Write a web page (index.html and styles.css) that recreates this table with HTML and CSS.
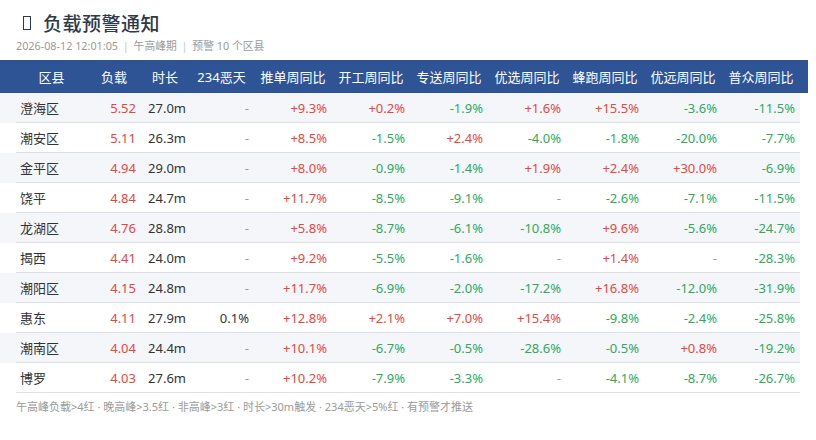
FILE: index.html
```html
<!DOCTYPE html>
<html lang="zh">
<head>
<meta charset="utf-8">
<title>负载预警通知</title>
<link rel="stylesheet" href="styles.css">
</head>
<body>
<div class="page">
  <h1 class="title"><span class="tofu"></span>负载预警通知</h1>
  <div class="meta">2026-08-12 12:01:05 <span class="sep">|</span> 午高峰期 <span class="sep">|</span> 预警 10 个区县</div>
  <table class="grid">
    <colgroup>
      <col class="c-name"><col class="c-load"><col class="c-dur"><col class="c-bad">
      <col class="c-w"><col class="c-w"><col class="c-w"><col class="c-w"><col class="c-w"><col class="c-w"><col class="c-w">
    </colgroup>
    <thead>
      <tr>
        <th>区县</th><th>负载</th><th>时长</th><th>234恶天</th><th>推单周同比</th><th>开工周同比</th><th>专送周同比</th><th>优选周同比</th><th>蜂跑周同比</th><th>优远周同比</th><th>普众周同比</th>
      </tr>
    </thead>
    <tbody>
      <tr class="odd"><td>澄海区</td><td class="up">5.52</td><td>27.0m</td><td class="na">-</td><td class="up">+9.3%</td><td class="up">+0.2%</td><td class="dn">-1.9%</td><td class="up">+1.6%</td><td class="up">+15.5%</td><td class="dn">-3.6%</td><td class="dn">-11.5%</td></tr>
      <tr><td>潮安区</td><td class="up">5.11</td><td>26.3m</td><td class="na">-</td><td class="up">+8.5%</td><td class="dn">-1.5%</td><td class="up">+2.4%</td><td class="dn">-4.0%</td><td class="dn">-1.8%</td><td class="dn">-20.0%</td><td class="dn">-7.7%</td></tr>
      <tr class="odd"><td>金平区</td><td class="up">4.94</td><td>29.0m</td><td class="na">-</td><td class="up">+8.0%</td><td class="dn">-0.9%</td><td class="dn">-1.4%</td><td class="up">+1.9%</td><td class="up">+2.4%</td><td class="up">+30.0%</td><td class="dn">-6.9%</td></tr>
      <tr><td>饶平</td><td class="up">4.84</td><td>24.7m</td><td class="na">-</td><td class="up">+11.7%</td><td class="dn">-8.5%</td><td class="dn">-9.1%</td><td class="na">-</td><td class="dn">-2.6%</td><td class="dn">-7.1%</td><td class="dn">-11.5%</td></tr>
      <tr class="odd"><td>龙湖区</td><td class="up">4.76</td><td>28.8m</td><td class="na">-</td><td class="up">+5.8%</td><td class="dn">-8.7%</td><td class="dn">-6.1%</td><td class="dn">-10.8%</td><td class="up">+9.6%</td><td class="dn">-5.6%</td><td class="dn">-24.7%</td></tr>
      <tr><td>揭西</td><td class="up">4.41</td><td>24.0m</td><td class="na">-</td><td class="up">+9.2%</td><td class="dn">-5.5%</td><td class="dn">-1.6%</td><td class="na">-</td><td class="up">+1.4%</td><td class="na">-</td><td class="dn">-28.3%</td></tr>
      <tr class="odd"><td>潮阳区</td><td class="up">4.15</td><td>24.8m</td><td class="na">-</td><td class="up">+11.7%</td><td class="dn">-6.9%</td><td class="dn">-2.0%</td><td class="dn">-17.2%</td><td class="up">+16.8%</td><td class="dn">-12.0%</td><td class="dn">-31.9%</td></tr>
      <tr><td>惠东</td><td class="up">4.11</td><td>27.9m</td><td>0.1%</td><td class="up">+12.8%</td><td class="up">+2.1%</td><td class="up">+7.0%</td><td class="up">+15.4%</td><td class="dn">-9.8%</td><td class="dn">-2.4%</td><td class="dn">-25.8%</td></tr>
      <tr class="odd"><td>潮南区</td><td class="up">4.04</td><td>24.4m</td><td class="na">-</td><td class="up">+10.1%</td><td class="dn">-6.7%</td><td class="dn">-0.5%</td><td class="dn">-28.6%</td><td class="dn">-0.5%</td><td class="up">+0.8%</td><td class="dn">-19.2%</td></tr>
      <tr><td>博罗</td><td class="up">4.03</td><td>27.6m</td><td class="na">-</td><td class="up">+10.2%</td><td class="dn">-7.9%</td><td class="dn">-3.3%</td><td class="na">-</td><td class="dn">-4.1%</td><td class="dn">-8.7%</td><td class="dn">-26.7%</td></tr>
    </tbody>
  </table>
  <div class="foot">午高峰负载&gt;4红 · 晚高峰&gt;3.5红 · 非高峰&gt;3红 · 时长&gt;30m触发 · 234恶天&gt;5%红 · 有预警才推送</div>
</div>
</body>
</html>
```

FILE: styles.css
```css
html, body {
  margin: 0;
  padding: 0;
  background: #ffffff;
}
body {
  font-family: "Noto Sans", "Noto Sans CJK SC", sans-serif;
  color: #333333;
  overflow: hidden;
}
.page {
  width: 784px;
  padding: 9px 16px 0 16px;
}
.title {
  margin: 0;
  display: flex;
  align-items: center;
  height: 28px;
  font-size: 19px;
  font-weight: 500;
  color: #2d3a4b;
  letter-spacing: 0.5px;
}
.tofu {
  display: inline-block;
  width: 8px;
  height: 14px;
  border: 1.3px solid #2d3a4b;
  box-sizing: border-box;
  margin: 0 12px 0 7px;
}
.meta {
  margin-top: 0;
  height: 18px;
  line-height: 18px;
  font-size: 10.8px;
  color: #9a9a9a;
}
.sep {
  color: #c8c8c8;
  margin: 0 2px;
}
.grid {
  margin-top: 5px;
  width: 784px;
  border-collapse: collapse;
  table-layout: fixed;
  font-size: 13px;
}
.c-name { width: 71px; }
.c-load { width: 54px; }
.c-dur { width: 48px; }
.c-bad { width: 65px; }
.c-w { width: 78px; }
.grid th {
  height: 33px;
  padding: 0;
  background: #2f5496;
  color: #ffffff;
  font-weight: 400;
  text-align: center;
  white-space: nowrap;
}
.grid th:first-child {
  box-shadow: -16px 0 0 #2f5496;
}
.grid th:last-child {
  box-shadow: 8px 0 0 #2f5496;
}
.grid td {
  height: 29px;
  padding: 0 5px 0 0;
  text-align: right;
  border-bottom: 1px solid #dcdfe6;
  white-space: nowrap;
}
.grid td:first-child {
  text-align: left;
  padding: 0 0 0 4px;
}
.grid td:nth-child(3) {
  padding-right: 3px;
}
.grid tr.odd td {
  background: #f5f6fa;
}
.grid tr.odd td:first-child {
  box-shadow: -16px 0 0 #f5f6fa;
}
.up { color: #e8473d; }
.dn { color: #2eaa5e; }
.na { color: #999999; }
.foot {
  margin-top: 6px;
  font-size: 11px;
  color: #9a9a9a;
  line-height: 16px;
}
```
